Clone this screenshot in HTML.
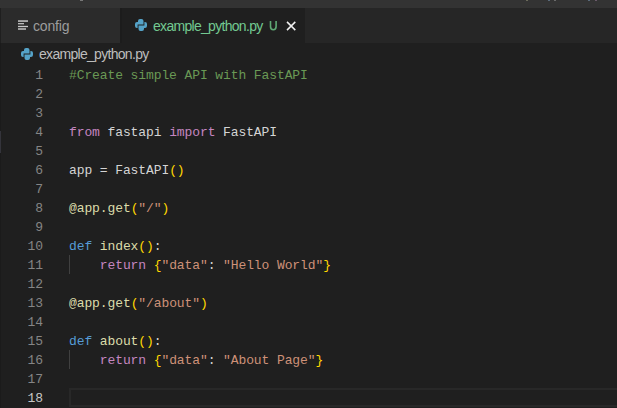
<!DOCTYPE html>
<html><head><meta charset="utf-8">
<style>
*{margin:0;padding:0;box-sizing:border-box}
html,body{width:617px;height:408px;overflow:hidden;background:#1f1f1f}
body{position:relative;font-family:"Liberation Sans",sans-serif}
.top{position:absolute;left:0;top:0;width:617px;height:8px;background:#333333}
.tabbar{position:absolute;left:0;top:8px;width:617px;height:35px;background:#262626}
.tab1{position:absolute;z-index:1;left:0;top:0;width:120px;height:35px;background:#2b2b2b;border-left:1px solid #1f1f1f}
.tab2{position:absolute;left:120px;top:0;width:185px;height:35px;background:#1f1f1f}
.t{position:absolute;font-size:14px;letter-spacing:-0.7px;white-space:nowrap;line-height:17px}
.crumb{position:absolute;left:0;top:43px;width:617px;height:22px;background:#1f1f1f}
.code{position:absolute;left:0;top:66px;width:617px}
.ln{position:absolute;left:0;height:19px;width:617px;font-family:"Liberation Mono",monospace;font-size:13px;letter-spacing:-0.1px;line-height:19px;white-space:pre}
.ln .n{position:absolute;left:0;width:43px;text-align:right;color:#858585}
.ln .c{position:absolute;left:69px;color:#d4d4d4}
.cm{color:#6a9955}.kw{color:#c586c0}.df{color:#569cd6}.fn{color:#dcdcaa}.st{color:#ce9178}.b1{color:#ffd700}.b2{color:#da70d6}.pl{color:#d4d4d4}
</style></head><body>
<div class="top"><div style="position:absolute;left:80px;top:0;width:3px;height:1px;background:#777777"></div><div style="position:absolute;left:526px;top:0;width:2px;height:1px;background:#6a6a5a"></div><div style="position:absolute;left:548px;top:0;width:2px;height:1px;background:#5a6a7a"></div><div style="position:absolute;left:554px;top:0;width:2px;height:1px;background:#6a6a6a"></div><div style="position:absolute;left:588px;top:0;width:2px;height:1px;background:#5a6a7a"></div><div style="position:absolute;left:595px;top:0;width:2px;height:1px;background:#6a5a6a"></div></div>
<div class="tabbar">
  <div class="tab1">
    <svg style="position:absolute;left:17px;top:12px" width="11" height="11" viewBox="0 0 11 11">
      <rect x="0" y="0.3" width="10" height="1.5" fill="#c8c8c8"/>
      <rect x="0" y="3.1" width="6" height="1.2" fill="#c8c8c8"/>
      <rect x="0" y="5.85" width="10" height="1.3" fill="#c8c8c8"/>
      <rect x="0" y="8.2" width="8" height="1.6" fill="#b8b8b8"/>
    </svg>
    <div class="t" style="left:32px;top:10px;color:#9d9d9d;letter-spacing:-0.15px">config</div>
  </div>
  <div class="tab2">
    <svg style="position:absolute;left:15px;top:11px" width="12" height="12" viewBox="0 0 12 12"><path d="M3,2 A2,2 0 0 1 5,0 H6.5 A2,2 0 0 1 8.5,2 V5.4 H2.6 V9 H2 A2,2 0 0 1 0,7 V5 A2,2 0 0 1 2,3 H3 Z M9,10 A2,2 0 0 1 7,12 H5.5 A2,2 0 0 1 3.5,10 V6.6 H9.4 V3 H10 A2,2 0 0 1 12,5 V7 A2,2 0 0 1 10,9 H9 Z" fill="#55a3c8"/></svg>
    <div class="t" style="left:33px;top:10px;color:#73c991">example_python.py</div>
    <svg style="position:absolute;left:149px;top:13px" width="9" height="10" viewBox="0 0 9 10"><path d="M1.5,0 V5.6 C1.5,7.9 2.5,8.7 4.3,8.7 C6.1,8.7 7.1,7.9 7.1,5.6 V0" fill="none" stroke="#5fa874" stroke-width="1.6"/></svg>
    <svg style="position:absolute;left:166px;top:13px" width="10" height="10" viewBox="0 0 10 10"><path d="M1,0.9 L9.3,9.1 M9.3,0.9 L1,9.1" stroke="#f0f0f0" stroke-width="1.5"/></svg>
  </div>
</div>
<div class="crumb">
  <svg style="position:absolute;left:21px;top:5px" width="12" height="12" viewBox="0 0 12 12"><path d="M3,2 A2,2 0 0 1 5,0 H6.5 A2,2 0 0 1 8.5,2 V5.4 H2.6 V9 H2 A2,2 0 0 1 0,7 V5 A2,2 0 0 1 2,3 H3 Z M9,10 A2,2 0 0 1 7,12 H5.5 A2,2 0 0 1 3.5,10 V6.6 H9.4 V3 H10 A2,2 0 0 1 12,5 V7 A2,2 0 0 1 10,9 H9 Z" fill="#55a3c8"/></svg>
  <div class="t" style="left:39px;top:3px;color:#bdbdbd">example_python.py</div>
</div>
<div class="code">
<div class="ln" style="top:0"><span class="n">1</span><span class="c"><span class="cm">#Create simple API with FastAPI</span></span></div>
<div class="ln" style="top:19px"><span class="n">2</span></div>
<div class="ln" style="top:38px"><span class="n">3</span></div>
<div class="ln" style="top:57px"><span class="n">4</span><span class="c"><span class="kw">from</span> fastapi <span class="kw">import</span> FastAPI</span></div>
<div class="ln" style="top:76px"><span class="n">5</span></div>
<div class="ln" style="top:95px"><span class="n">6</span><span class="c">app = FastAPI<span class="b1">()</span></span></div>
<div class="ln" style="top:114px"><span class="n">7</span></div>
<div class="ln" style="top:133px"><span class="n">8</span><span class="c"><span class="fn">@app.get</span><span class="b1">(</span><span class="st">"/"</span><span class="b1">)</span></span></div>
<div class="ln" style="top:152px"><span class="n">9</span></div>
<div class="ln" style="top:171px"><span class="n">10</span><span class="c"><span class="df">def</span> <span class="fn">index</span><span class="b1">()</span>:</span></div>
<div class="ln" style="top:190px"><span class="n">11</span><span class="c">    <span class="kw">return</span> <span class="b1">{</span><span class="st">"data"</span>: <span class="st">"Hello World"</span><span class="b1">}</span></span></div>
<div class="ln" style="top:209px"><span class="n">12</span></div>
<div class="ln" style="top:228px"><span class="n">13</span><span class="c"><span class="fn">@app.get</span><span class="b1">(</span><span class="st">"/about"</span><span class="b1">)</span></span></div>
<div class="ln" style="top:247px"><span class="n">14</span></div>
<div class="ln" style="top:266px"><span class="n">15</span><span class="c"><span class="df">def</span> <span class="fn">about</span><span class="b1">()</span>:</span></div>
<div class="ln" style="top:285px"><span class="n">16</span><span class="c">    <span class="kw">return</span> <span class="b1">{</span><span class="st">"data"</span>: <span class="st">"About Page"</span><span class="b1">}</span></span></div>
<div class="ln" style="top:304px"><span class="n">17</span></div>
<div class="ln" style="top:323px"><span class="n" style="color:#c6c6c6">18</span></div>
</div>
<div style="position:absolute;left:69px;top:255px;width:1px;height:19px;background:#404040"></div>
<div style="position:absolute;left:69px;top:350px;width:1px;height:19px;background:#404040"></div>
<div style="position:absolute;left:69px;top:388px;width:548px;height:19px;border:2px solid #282828;border-right:none"></div>
<div style="position:absolute;left:0;top:8px;width:1px;height:400px;background:#1b1b1b"></div>
<div style="position:absolute;left:0;top:131px;width:1px;height:22px;background:#34343b"></div>
<div id="tb" style="position:absolute;left:120px;top:8px;width:2px;height:35px;background:#1c1c1c"></div>
</body></html>
